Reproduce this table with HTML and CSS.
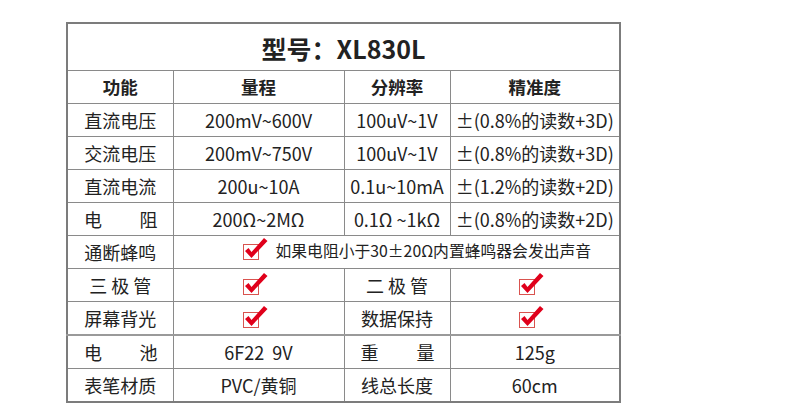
FILE: index.html
```html
<!DOCTYPE html>
<html lang="zh">
<head>
<meta charset="utf-8">
<link rel="stylesheet" href="styles.css">
</head>
<body>
<table class="spec">
  <colgroup>
    <col class="c1"><col class="c2"><col class="c3"><col class="c4">
  </colgroup>
  <tr class="title-row"><th colspan="4">型号：XL830L</th></tr>
  <tr class="head-row"><th>功能</th><th>量程</th><th>分辨率</th><th>精准度</th></tr>
  <tr><td>直流电压</td><td>200mV~600V</td><td>100uV~1V</td><td>±(0.8%的读数+3D)</td></tr>
  <tr><td>交流电压</td><td>200mV~750V</td><td>100uV~1V</td><td>±(0.8%的读数+3D)</td></tr>
  <tr><td>直流电流</td><td>200u~10A</td><td>0.1u~10mA</td><td>±(1.2%的读数+2D)</td></tr>
  <tr><td><span class="just"><span>电</span><span>阻</span></span></td><td>200Ω~2MΩ</td><td>0.1Ω ~1kΩ</td><td>±(0.8%的读数+2D)</td></tr>
  <tr><td>通断蜂鸣</td><td colspan="3" class="buzz"><span class="buzz-in"><svg class="chk" viewBox="0 0 26 24" width="26" height="24"><rect x="1.5" y="7.5" width="15" height="15" fill="none" stroke="#d9534f" stroke-width="1"/><polygon points="3,14 6.5,11 9.5,15 22,1 25.5,4 9.5,21" fill="#e0001b"/></svg><span class="buzz-text">如果电阻小于30±20Ω内置蜂鸣器会发出声音</span></span></td></tr>
  <tr><td>三 极 管</td><td><svg class="chk" viewBox="0 0 26 24" width="26" height="24"><rect x="1.5" y="7.5" width="15" height="15" fill="none" stroke="#d9534f" stroke-width="1"/><polygon points="3,14 6.5,11 9.5,15 22,1 25.5,4 9.5,21" fill="#e0001b"/></svg></td><td>二 极 管</td><td><svg class="chk" viewBox="0 0 26 24" width="26" height="24"><rect x="1.5" y="7.5" width="15" height="15" fill="none" stroke="#d9534f" stroke-width="1"/><polygon points="3,14 6.5,11 9.5,15 22,1 25.5,4 9.5,21" fill="#e0001b"/></svg></td></tr>
  <tr class="thick-bottom"><td>屏幕背光</td><td><svg class="chk" viewBox="0 0 26 24" width="26" height="24"><rect x="1.5" y="7.5" width="15" height="15" fill="none" stroke="#d9534f" stroke-width="1"/><polygon points="3,14 6.5,11 9.5,15 22,1 25.5,4 9.5,21" fill="#e0001b"/></svg></td><td>数据保持</td><td><svg class="chk" viewBox="0 0 26 24" width="26" height="24"><rect x="1.5" y="7.5" width="15" height="15" fill="none" stroke="#d9534f" stroke-width="1"/><polygon points="3,14 6.5,11 9.5,15 22,1 25.5,4 9.5,21" fill="#e0001b"/></svg></td></tr>
  <tr><td><span class="just"><span>电</span><span>池</span></span></td><td>6F22&nbsp; 9V</td><td><span class="just"><span>重</span><span>量</span></span></td><td>125g</td></tr>
  <tr><td>表笔材质</td><td>PVC/黄铜</td><td>线总长度</td><td>60cm</td></tr>
</table>
</body>
</html>
```

FILE: styles.css
```css
html, body {
  margin: 0;
  padding: 0;
  background: #fff;
}
body {
  font-family: "Noto Sans CJK SC", "Noto Sans", sans-serif;
  color: #222;
}
.spec {
  margin: 22px 0 0 66px;
  width: 553px;
  table-layout: fixed;
  border-collapse: collapse;
  border: 2px solid #7c7c7c;
}
.c1 { width: 106px; }
.c2 { width: 171px; }
.c3 { width: 106px; }
.c4 { width: 170px; }
.spec td, .spec th {
  border: 1px solid #8a8a8a;
  padding: 0;
  height: 32px;
  text-align: center;
  vertical-align: middle;
  font-size: 18px;
  font-weight: 400;
  white-space: nowrap;
  line-height: 20px;
}
.spec .title-row th {
  height: 44px;
  font-size: 25px;
  font-weight: 700;
  padding-top: 2px;
}
.spec .head-row th {
  font-weight: 700;
  font-size: 17.5px;
}
.just {
  display: flex;
  justify-content: space-between;
  padding: 0 15px 0 16px;
}
.chk {
  display: inline-block;
  vertical-align: middle;
  margin: -6px 8px 0 0;
}
.spec td.buzz {
  text-align: left;
  padding-left: 68px;
}
.buzz-in {
  display: inline-flex;
  align-items: center;
  gap: 8px;
}
.buzz-in .chk { margin: -4px 0 0 0; }
.buzz-text {
  font-size: 15.8px;
}
.thick-bottom td {
  border-bottom: 2px solid #9a9a9a;
}
```
